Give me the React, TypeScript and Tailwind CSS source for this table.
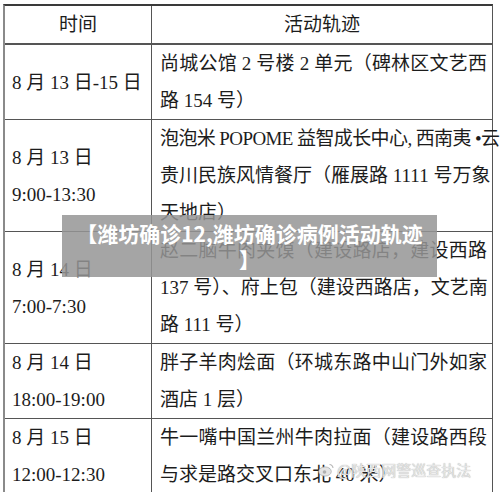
import React from "react";

const rows = [
  {
    time: ["8 月 13 日-15 日"],
    place: ["尚城公馆 2 号楼 2 单元（碑林区文艺西", "路 154 号）"],
  },
  {
    time: ["8 月 13 日", "9:00-13:30"],
    place: ["泡泡米 POPOME 益智成长中心, 西南夷 •云", "贵川民族风情餐厅（雁展路 1111 号万象", "天地店）"],
    tight: 0,
  },
  {
    time: ["8 月 14 日", "7:00-7:30"],
    place: ["赵二脑牛肉夹馍（建设路店，建设西路", "137 号）、府上包（建设西路店，文艺南", "路 111 号）"],
  },
  {
    time: ["8 月 14 日", "18:00-19:00"],
    place: ["胖子羊肉烩面（环城东路中山门外如家", "酒店 1 层）"],
  },
  {
    time: ["8 月 15 日", "12:00-12:30"],
    place: ["牛一嘴中国兰州牛肉拉面（建设路西段", "与求是路交叉口东北 40 米）"],
  },
];

export default function App() {
  return (
    <div className="relative h-[492px] w-[500px] overflow-hidden bg-white pl-[3px] pt-[4px] font-['Liberation_Serif','Noto_Sans_CJK_SC',serif] text-[19px] leading-[37px] text-[#1c1c1c]">
      <div className="w-[490px] border-l-2 border-t-2 border-r border-b border-l-[#8a8a8a] border-t-[#3a3a3a] border-r-[#555] border-b-[#555]">
        <div className="flex border-b-2 border-[#555]">
          <div className="w-[147px] shrink-0 border-r border-[#555] text-center">时间</div>
          <div className="flex-1 text-center">活动轨迹</div>
        </div>
        {rows.map((r, i) => (
          <div key={i} className={`flex ${i < rows.length - 1 ? "border-b border-[#555]" : ""}`}>
            <div className="flex w-[147px] shrink-0 flex-col justify-center border-r border-[#555] pl-[7px] whitespace-nowrap">
              {r.time.map((t) => (
                <div key={t}>{t}</div>
              ))}
            </div>
            <div className="min-w-0 flex-1 pl-[8px] pr-[5px]">
              {r.place.map((p, j) => (
                <div
                  key={j}
                  className={`whitespace-nowrap ${j < r.place.length - 1 ? "text-justify [text-align-last:justify]" : ""} ${r.tight === j ? "tracking-[-0.6px]" : ""}`}
                >
                  {p}
                </div>
              ))}
            </div>
          </div>
        ))}
      </div>

      {/* title overlay */}
      <div className="absolute left-[62px] top-[215px] h-[62px] w-[375px] bg-[#959595]/85 pt-[5px] text-center font-['Noto_Sans_CJK_SC',sans-serif] text-[21px] font-bold leading-[26px] text-white">
        【潍坊确诊12,潍坊确诊病例活动轨迹
        <br />】
      </div>

      {/* watermark */}
      <div className="absolute left-[318px] top-[461px] flex items-center gap-[3px] font-['Noto_Sans_CJK_SC',sans-serif] text-[15px] leading-[18px] text-[#e6e6e6] [text-shadow:0_0_1px_#9a9a9a]">
        <svg width="16" height="14" viewBox="0 0 16 14">
          <ellipse cx="7" cy="8.5" rx="6.3" ry="4.6" fill="#e4e4e4" stroke="#a8a8a8" strokeWidth="0.7" />
          <circle cx="6.5" cy="9" r="1.8" fill="#b0b0b0" />
          <path d="M11.5 1.5a3.5 3.5 0 0 1 3.5 3.5" stroke="#b8b8b8" strokeWidth="1.1" fill="none" />
        </svg>
        <span>@陕西网警巡查执法</span>
      </div>
    </div>
  );
}
